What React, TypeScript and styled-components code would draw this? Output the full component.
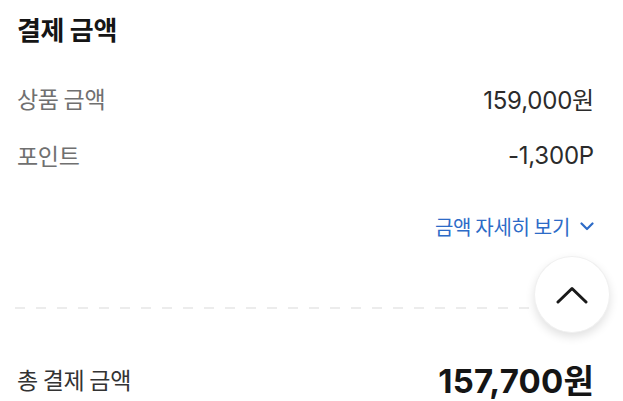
import React from "react";
import styled, { createGlobalStyle } from "styled-components";

const Global = createGlobalStyle`
  html, body { margin: 0; padding: 0; background: #fff; }
  body { font-family: "Noto Sans CJK KR", "Noto Sans", sans-serif; -webkit-font-smoothing: antialiased; }
`;

const Page = styled.div`
  position: relative;
  width: 623px;
  height: 401px;
  overflow: hidden;
  box-sizing: border-box;
  padding: 12px 29px 0 17px;
  display: flex;
  flex-direction: column;
`;

const Title = styled.h2`
  margin: 0;
  font-size: 26px;
  line-height: 34px;
  font-weight: 700;
  color: #151515;
  letter-spacing: -0.3px;
`;

const Row = styled.div<{ $mt: number }>`
  margin-top: ${(p) => p.$mt}px;
  height: 40px;
  display: flex;
  align-items: center;
  justify-content: space-between;
`;

const Label = styled.span`
  font-size: 23px;
  color: #707070;
  letter-spacing: -0.3px;
`;

const Value = styled.span`
  font-family: "Inter", "Noto Sans CJK KR", sans-serif;
  font-size: 24px;
  color: #2b2b2b;
  letter-spacing: -0.2px;
`;

const LinkRow = styled.div`
  margin-top: 38px;
  height: 26px;
  display: flex;
  justify-content: flex-end;
  align-items: center;
`;

const DetailLink = styled.button`
  border: 0;
  background: none;
  padding: 0;
  display: flex;
  align-items: center;
  gap: 10px;
  font-family: inherit;
  font-size: 20px;
  color: #2d6bc7;
  letter-spacing: -0.3px;
  cursor: pointer;
`;

const Dashed = styled.div`
  margin: 68px 0 0 -2px;
  height: 2px;
  background: repeating-linear-gradient(
    to right,
    #ececec 0 10px,
    transparent 10px 21px
  );
`;

const TotalRow = styled(Row)``;

const TotalLabel = styled(Label)`
  color: #333;
`;

const TotalValue = styled.span`
  font-family: "Inter", "Noto Sans CJK KR", sans-serif;
  font-size: 33px;
  font-weight: 700;
  color: #151515;
  letter-spacing: 0.2px;
`;

const TopButton = styled.button`
  position: absolute;
  left: 534px;
  top: 256px;
  width: 76px;
  height: 77px;
  border-radius: 50%;
  border: 1px solid #f0f0f0;
  background: #fff;
  box-shadow: 0 4px 10px rgba(0, 0, 0, 0.12);
  display: flex;
  align-items: center;
  justify-content: center;
  padding: 0;
`;

export default function App() {
  return (
    <>
      <Global />
      <Page>
        <Title>결제 금액</Title>
        <Row $mt={32}>
          <Label>상품 금액</Label>
          <Value>159,000원</Value>
        </Row>
        <Row $mt={17}>
          <Label>포인트</Label>
          <Value>-1,300P</Value>
        </Row>
        <LinkRow>
          <DetailLink>
            금액 자세히 보기
            <svg width="14" height="9" viewBox="0 0 14 9" fill="none">
              <path d="M1.5 1.5 L7 7 L12.5 1.5" stroke="#2d6bc7" strokeWidth="2.2" strokeLinecap="round" strokeLinejoin="round" />
            </svg>
          </DetailLink>
        </LinkRow>
        <Dashed />
        <TotalRow $mt={50}>
          <TotalLabel>총 결제 금액</TotalLabel>
          <TotalValue>157,700원</TotalValue>
        </TotalRow>
        <TopButton aria-label="맨 위로">
          <svg width="32" height="18" viewBox="0 0 32 18" fill="none">
            <path d="M2 16 L16 2.5 L30 16" stroke="#1a1a1a" strokeWidth="3" strokeLinecap="round" strokeLinejoin="round" />
          </svg>
        </TopButton>
      </Page>
    </>
  );
}
